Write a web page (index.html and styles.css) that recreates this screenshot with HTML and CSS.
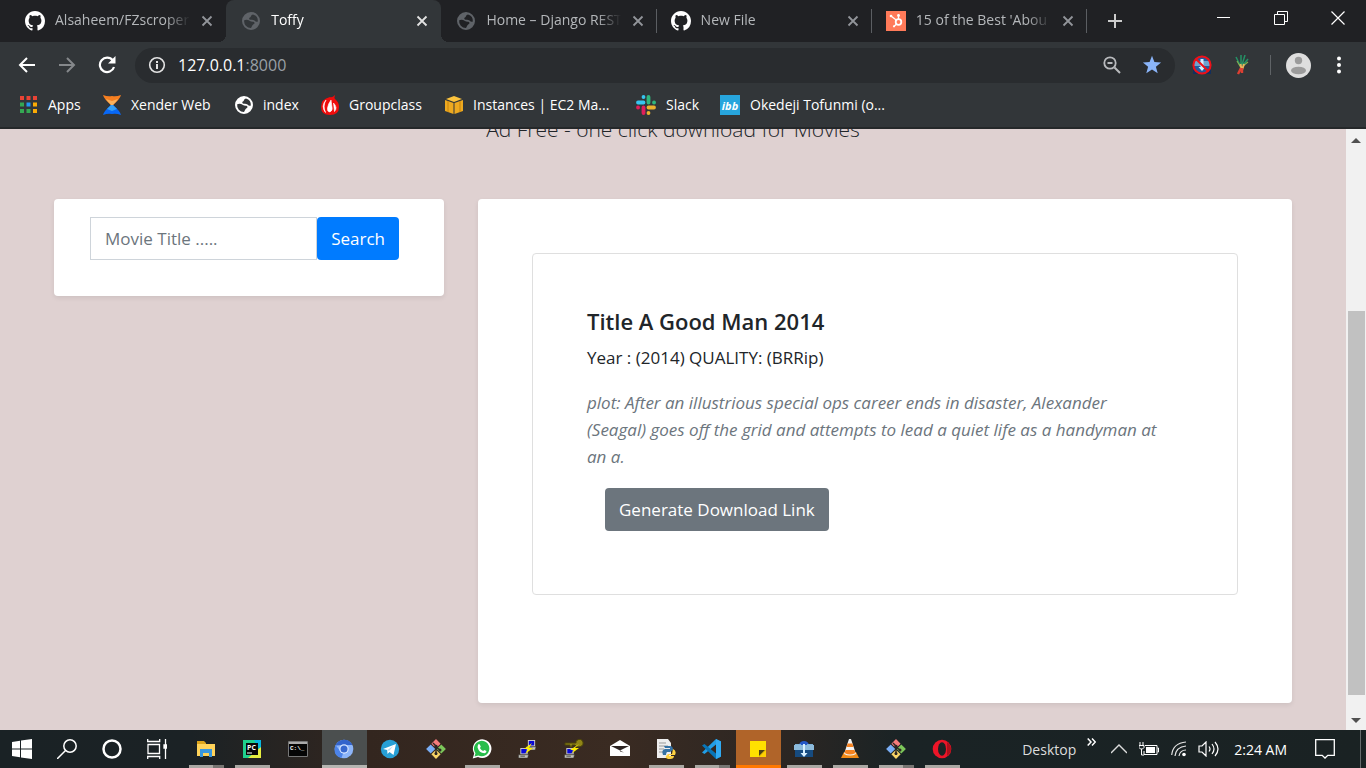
FILE: index.html
```html
<!DOCTYPE html>
<html lang="en">
<head>
<meta charset="utf-8">
<title>Toffy</title>
<link rel="stylesheet" href="styles.css">
</head>
<body>
<svg class="sprite" aria-hidden="true">
  <symbol id="github" viewBox="0 0 16 16"><path fill="#fff" d="M8 0C3.58 0 0 3.58 0 8c0 3.54 2.29 6.53 5.47 7.59.4.07.55-.17.55-.38 0-.19-.01-.82-.01-1.49-2.01.37-2.53-.49-2.69-.94-.09-.23-.48-.94-.82-1.13-.28-.15-.68-.52-.01-.53.63-.01 1.08.58 1.23.82.72 1.21 1.87.87 2.33.66.07-.52.28-.87.51-1.07-1.78-.2-3.64-.89-3.64-3.95 0-.87.31-1.59.82-2.15-.08-.2-.36-1.02.08-2.12 0 0 .67-.21 2.2.82.64-.18 1.32-.27 2-.27.68 0 1.36.09 2 .27 1.53-1.04 2.2-.82 2.2-.82.44 1.1.16 1.92.08 2.12.51.56.82 1.27.82 2.15 0 3.07-1.87 3.75-3.65 3.95.29.25.54.73.54 1.48 0 1.07-.01 1.93-.01 2.2 0 .21.15.46.55.38A8.013 8.013 0 0016 8c0-4.42-3.58-8-8-8z"/></symbol>
  <symbol id="globe" viewBox="0 0 18 18"><path fill="currentColor" fill-rule="evenodd" d="M9 0a9 9 0 1 0 0 18A9 9 0 0 0 9 0zM2.200 8.200Q5 7 8 9q1 1 3.500.8 1.500.4.8 2-1.300.4-2 1.700-.6 1.200-1.300 2.500A6.800 6.800 0 0 1 2.200 8.200zM15.800 9.500Q14 10.200 12.500 8.500 11 7.300 8.500 7.800 6.500 7.300 7.500 5.800 9 5.200 9 4 9.500 2.500 11 2.500A6.800 6.800 0 0 1 15.800 9.500z"/></symbol>
  <symbol id="close" viewBox="0 0 12 12"><path d="M1.500 1.500l9 9m0-9l-9 9" stroke="currentColor" stroke-width="1.800"/></symbol>
  <symbol id="gitlogo" viewBox="0 0 20 20"><g transform="rotate(45 10 10)"><rect x="3" y="3" width="6.500" height="6.500" fill="#f57c7c"/><rect x="10.500" y="3" width="6.500" height="6.500" fill="#7cc65a"/><rect x="3" y="10.500" width="6.500" height="6.500" fill="#7aaef5"/><rect x="10.500" y="10.500" width="6.500" height="6.500" fill="#f7d366"/></g><path d="M7 4l3 3v9M10 8l4 3" stroke="#2b2523" stroke-width="1.400" fill="none"/><g fill="#2b2523"><circle cx="10" cy="7.500" r="1.700"/><circle cx="14" cy="11" r="1.500"/><circle cx="10" cy="14.500" r="1.500"/></g></symbol>
  <symbol id="pc" viewBox="0 0 12 11"><path d="M2 0h8v7H2z" fill="#d5d5cc"/><path d="M3 1h6v5H3z" fill="#0808d8"/><path d="M0 7.500h11l-1 3.500H0z" fill="#c1c1b8" stroke="#333" stroke-width=".5"/><path d="M2 9h5" stroke="#444"/></symbol>
  <symbol id="download" viewBox="0 0 20 20"><path d="M5 6q1-4 5-4t5 4z" fill="#2458c8"/><path d="M1 5h6v11H1zM13 5h6v11h-6z" fill="#7fb2d8"/><path d="M1 10h18v8H1z" fill="#164b80"/><path d="M0 6h20v5H0z" fill="#8dbbdc"/><path d="M9 5h2v9h2.500L10 18l-3.500-4H9z" fill="#d7efff"/></symbol>
</svg>

<header class="browser">
  <div class="tabstrip">
    <nav class="tabs" aria-label="Tabs">
      <div class="tab"><svg class="favicon"><use href="#github"/></svg><span class="tabtitle">Alsaheem/FZscroper</span><button class="tabclose" aria-label="Close tab"><svg><use href="#close"/></svg></button></div>
      <div class="tab active"><svg class="favicon globe"><use href="#globe"/></svg><span class="tabtitle">Toffy</span><button class="tabclose" aria-label="Close tab"><svg><use href="#close"/></svg></button></div>
      <div class="tab divided"><svg class="favicon globe"><use href="#globe"/></svg><span class="tabtitle">Home – Django REST</span><button class="tabclose" aria-label="Close tab"><svg><use href="#close"/></svg></button></div>
      <div class="tab divided"><svg class="favicon"><use href="#github"/></svg><span class="tabtitle">New File</span><button class="tabclose" aria-label="Close tab"><svg><use href="#close"/></svg></button></div>
      <div class="tab divided"><svg class="favicon" viewBox="0 0 20 20"><path d="M0 0h20v20H0z" fill="#ff7a59"/><circle cx="12.500" cy="11" r="2.800" fill="none" stroke="#fff" stroke-width="1.800"/><path d="M5 5l5.500 4.200M12.500 8V5M10.500 13l-2.300 2.300" stroke="#fff" stroke-width="1.300"/><circle cx="5" cy="5" r="1.300" fill="#fff"/><circle cx="12.500" cy="4.500" r="1.400" fill="#fff"/><circle cx="8" cy="15.300" r="1.100" fill="#fff"/></svg><span class="tabtitle">15 of the Best 'Abou</span><button class="tabclose" aria-label="Close tab"><svg><use href="#close"/></svg></button></div>
    </nav>
    <button class="newtab" aria-label="New tab"><svg viewBox="0 0 16 16" width="16" height="16"><path d="M8 1v14M1 8h14" stroke="#ccc" stroke-width="2"/></svg></button>
    <div class="windowctl">
      <button aria-label="Minimize"><svg viewBox="0 0 14 14" width="14" height="14"><path d="M0 6.500h13" stroke="#fff"/></svg></button>
      <button aria-label="Restore"><svg viewBox="0 0 14 14" width="14" height="14"><path d="M.5 3.500h10v10H.5zM3.500 3V.5h10v10H11" stroke="#fff" fill="none"/></svg></button>
      <button aria-label="Close"><svg viewBox="0 0 14 14" width="14" height="14"><path d="M.5.5l13 13m0-13l-13 13" stroke="#fff" stroke-width="1.200"/></svg></button>
    </div>
  </div>

  <div class="toolbar">
    <button class="nav" aria-label="Back"><svg viewBox="0 0 18 18" width="18" height="18"><path d="M17 9H2m7-7L2 9l7 7" stroke="#fff" stroke-width="2" fill="none"/></svg></button>
    <button class="nav" aria-label="Forward"><svg viewBox="0 0 18 18" width="18" height="18"><path d="M1 9h15M9 2l7 7-7 7" stroke="#85888b" stroke-width="2" fill="none"/></svg></button>
    <button class="nav" aria-label="Reload"><svg viewBox="0 0 18 18" width="18" height="18"><path d="M14.800 4.500A7.200 7.200 0 1 0 16 11" stroke="#fff" stroke-width="2.200" fill="none"/><path d="M17.500 0v7.500H10z" fill="#fff"/></svg></button>
    <div class="omnibox">
      <svg viewBox="0 0 18 18" width="18" height="18"><circle cx="9" cy="9" r="7.300" stroke="#e3e3e3" stroke-width="1.600" fill="none"/><path d="M9 8v5M9 5v2" stroke="#e3e3e3" stroke-width="2"/></svg>
      <span class="url">127.0.0.1<span>:8000</span></span>
      <button aria-label="Zoom"><svg viewBox="0 0 18 18" width="18" height="18"><circle cx="7" cy="7" r="5.700" stroke="#b8babd" stroke-width="1.800" fill="none"/><path d="M4.500 7h5M11.500 11.500L17 17" stroke="#b8babd" stroke-width="2"/></svg></button>
      <button aria-label="Bookmark"><svg viewBox="0 0 20 20" width="20" height="20"><path fill="#8ab4f8" d="M10 .8l2.400 6.300 6.700.4-5.200 4.200 1.800 6.600L10 14.600l-5.700 3.700 1.800-6.600L.9 7.500l6.700-.4z"/></svg></button>
    </div>
    <button class="ext" aria-label="Download manager"><svg viewBox="0 0 20 20" width="20" height="20"><path d="M1 9h18v10H1z" fill="#122f5e"/><circle cx="10" cy="10" r="8.500" fill="#245b9c"/><path d="M2 6h16v5H2z" fill="#6fa3cf"/><path d="M8.500 4h3v8h2L10 16l-3.500-4h2z" fill="#d7efff"/><circle cx="10" cy="10" r="8.600" fill="none" stroke="#f01018" stroke-width="2"/><path d="M4 4l12 12" stroke="#f01018" stroke-width="2"/></svg></button>
    <button class="ext" aria-label="Extension"><svg viewBox="0 0 20 20" width="20" height="20" fill="none" stroke-width="1.500"><path d="M8 10L4 2M9 10L9 0M10 10l3-10M11 10l5-6" stroke="#249266"/><path d="M8.500 12L5 6M11 11l5-4" stroke="#7fae54" stroke-width="1.200"/><path d="M8.500 9l1 5M12 9l-2 6" stroke="#e8b55c" stroke-width="2"/><path d="M9 13l-3 6M10 13v5" stroke="#dd3f32" stroke-width="2.400"/></svg></button>
    <span class="bar"></span>
    <button class="profile" aria-label="Profile"><svg viewBox="0 0 25 25" width="25" height="25"><circle cx="12.500" cy="12.500" r="12.500" fill="#dedede"/><circle cx="12.500" cy="7.500" r="3.700" fill="#9b9b9b"/><ellipse cx="12.500" cy="17.500" rx="7.500" ry="3.800" fill="#9b9b9b"/></svg></button>
    <button class="more" aria-label="Menu"><svg viewBox="0 0 4 18" width="4" height="18"><g fill="#fff"><circle cx="2" cy="2.500" r="2"/><circle cx="2" cy="9" r="2"/><circle cx="2" cy="15.500" r="2"/></g></svg></button>
  </div>

  <nav class="bookmarks" aria-label="Bookmarks">
    <a href="#"><svg viewBox="0 0 18 18"><path fill="#ea4335" d="M0 0h4v4H0zM6.500 0h4v4h-4zM13 0h4v4h-4z"/><path fill="#34a853" d="M0 6.500h4v4H0zM0 13h4v4H0z"/><path fill="#2196f3" d="M6.500 6.500h4v4h-4z"/><path fill="#fbab05" d="M13 6.500h4v4h-4zM13 13h4v4h-4z"/><path fill="#34a853" d="M6.500 13h4v4h-4z"/></svg>Apps</a>
    <a href="#"><svg viewBox="0 0 18 20"><path d="M0 0q5 2 9 1 4 1 9-1-1 4-8 10H8Q1 4 0 0z" fill="#f77f20"/><path d="M3 4l6 2 6-2q-2 3-5 6H8Q5 7 3 4z" fill="#f9b25c"/><path d="M8 10h2q7 6 8 10-5-2-9-1-4-1-9 1 1-4 8-10z" fill="#0868f7"/><path d="M8 10h2l4 4-5 2-5-2z" fill="#36a0f6"/></svg>Xender Web</a>
    <a href="#"><svg class="white" viewBox="0 0 18 20"><use href="#globe" y="1" width="18" height="18"/></svg>index</a>
    <a href="#"><svg viewBox="0 0 18 20"><path d="M9 2q2 1 5-2-1 3 0 4 4 3 4 8 0 8-9 8-9 0-9-8Q0 4 9 2z" fill="#f00c0c"/><path d="M5 5Q-.5 11 4.500 17.500 1.500 11 5 5zM10 5q-3 4-3.500 8-.5 4 2.500 4 3-1.500 2-5zM12.500 8l1 8.500q3.500-4-1-8.500z" fill="#fff" stroke="#fff" stroke-width=".6"/></svg>Groupclass</a>
    <a href="#"><svg viewBox="0 0 18 18"><path d="M1 3l8-3 8 3-8 3z" fill="#fbc33d"/><path d="M0 4l8.500 3v11L0 15zM18 4L9.500 7v11l8.500-3z" fill="#eda920"/><path d="M3 5v11M15 5v11" stroke="#c7820a"/></svg>Instances | EC2 Ma...</a>
    <a href="#"><svg viewBox="0 0 20 20"><g stroke-width="3.800" stroke-linecap="round"><path d="M2 7.500h5.500M7.500 2v.1" stroke="#36c5f0"/><path d="M12.500 2v5.500M18 7.500h.1" stroke="#2eb67d"/><path d="M12.500 12.500H18M12.500 18v.1" stroke="#ecb22e"/><path d="M7.500 12.500V18M2 12.500h.1" stroke="#e01e5a"/></g></svg>Slack</a>
    <a href="#"><svg viewBox="0 0 20 20"><path d="M0 0h20v20H0z" fill="#27a5dd"/><text x="10" y="15" text-anchor="middle" class="ibb">ibb</text></svg>Okedeji Tofunmi (o...</a>
  </nav>
</header>

<div class="viewport">
  <main class="page">
    <h2 class="tagline">Ad Free - one click download for Movies</h2>
    <div class="columns">
      <section class="card searchcard">
        <form class="searchform">
          <input type="text" placeholder="Movie Title ....." aria-label="Movie Title">
          <button type="button" class="btn primary">Search</button>
        </form>
      </section>
      <section class="card results">
        <article class="movie">
          <h1>Title A Good Man 2014</h1>
          <p>Year : (2014) QUALITY: (BRRip)</p>
          <p class="plot">plot: After an illustrious special ops career ends in disaster, Alexander (Seagal) goes off the grid and attempts to lead a quiet life as a handyman at an a.</p>
          <button type="button" class="btn secondary">Generate Download Link</button>
        </article>
      </section>
    </div>
  </main>
  <div class="scrollbar" aria-hidden="true">
    <svg viewBox="0 0 20 20"><path d="M5 14l5-5 5 5z" fill="#505050"/></svg>
    <div class="track"><div class="thumb"></div></div>
    <svg viewBox="0 0 20 20"><path d="M5 8h10l-5 5z" fill="#505050"/></svg>
  </div>
</div>

<footer class="taskbar">
  <div class="system">
    <button aria-label="Start"><svg viewBox="0 0 20 20"><path fill="#fff" d="M0 3l8-1.200v7.700H0zM9 1.600L20 0v9.500H9zM0 10.500h8v7.700L0 17zM9 10.500h11V20L9 18.400z"/></svg></button>
    <button aria-label="Search"><svg viewBox="0 0 20 20" fill="none" stroke="#fff" stroke-width="1.500"><circle cx="13" cy="7" r="6.200"/><path d="M8.500 11.500L0 20"/></svg></button>
    <button aria-label="Cortana"><svg viewBox="0 0 20 20"><circle cx="10" cy="10" r="8.500" fill="none" stroke="#fff" stroke-width="2.500"/></svg></button>
    <button aria-label="Task view"><svg viewBox="0 0 20 20" fill="none" stroke="#fff" stroke-width="1.300"><path d="M1 5.500h11.500v9H1zM.7 0v2.500h12V0M.7 20v-2.500h12V20M18.500 0v20"/><path d="M17 6h3v3h-3z" fill="#fff"/></svg></button>
  </div>
  <div class="apps">
    <button class="running multi" aria-label="File Explorer"><svg viewBox="0 0 20 20"><path d="M1 2h7l2 2v4H1z" fill="#dda51c"/><path d="M1 5h18v12H1z" fill="#ffd35a"/><path d="M4 10h12v8h-3v-4H7v4H4z" fill="#3897df"/></svg></button>
    <button class="running" aria-label="PyCharm"><svg viewBox="0 0 20 20"><path d="M1 1h18v18H1z" fill="#1fd08d"/><path d="M12 1h7v12z" fill="#09b6e0"/><path d="M19 8v11H6z" fill="#e6ee40"/><path d="M4 4h12v12H4z" fill="#080808"/><text x="5" y="11" class="pclogo">PC</text><path d="M5 14h5" stroke="#fff"/></svg></button>
    <button aria-label="Command Prompt"><svg viewBox="0 0 20 20"><path d="M.5 2.500h19v15H.5z" fill="#050505" stroke="#777"/><path d="M1 3h18v2H1z" fill="#aaa"/><text x="2" y="11" class="cmdlogo">C:\_</text></svg></button>
    <button class="current" aria-label="Chromium"><svg viewBox="0 0 20 20"><circle cx="10" cy="10" r="9.300" fill="#8db5f9"/><path d="M1.500 6.500A9.300 9.300 0 0 1 18.500 6H10z" fill="#3364cc"/><path d="M1.500 6l5 6.500 3 .5-2 6Q-2 17 1.500 6z" fill="#4c83e8"/><circle cx="10" cy="10" r="4.700" fill="#d9e7ff"/><circle cx="10" cy="10" r="3.500" fill="#3768cf"/></svg></button>
    <button aria-label="Telegram"><svg viewBox="0 0 20 20"><circle cx="10" cy="10" r="9.200" fill="#279fd5"/><path d="M3 10l13-5-2.500 11-4-3-2 2-.3-4z" fill="#fff"/><path d="M7.300 11l6-4-4.300 5" fill="#b9dcf0"/></svg></button>
    <button aria-label="Git Bash"><svg><use href="#gitlogo"/></svg></button>
    <button class="running" aria-label="WhatsApp"><svg viewBox="0 0 20 20"><path d="M.7 19.500l1.500-5A9.300 9.300 0 1 1 6 18z" fill="#fff"/><path d="M2.500 17.500l1-3.300A7.700 7.700 0 1 1 6.300 16.500z" fill="#28bd4b"/><path d="M6 6q1-2 2 0l.8 1.800-.9 1.200q1 2.200 3.200 3.100l1.200-1.200 2.200 1q0 2-2 2.300Q7 14 5.600 8.500q-.1-1.500.4-2.500z" fill="#fff"/></svg></button>
    <button aria-label="PuTTY"><svg viewBox="0 0 20 20"><use href="#pc" x="8" y="1" width="11" height="10"/><use href="#pc" x="0" y="9" width="12" height="10"/><path d="M14 4l-8 6h4l-3 5 8-6h-4z" fill="#fff000"/></svg></button>
    <button aria-label="PuTTYgen"><svg viewBox="0 0 20 20"><path d="M1 4h11V2q5-4 7 1 1 5-6 5l-2-2H8v2H6V6H1z" fill="#908516" stroke="#4b4508"/><use href="#pc" x="0" y="9" width="12" height="10"/><path d="M15 5l-9 6h4l-3 4 8-6h-4z" fill="#fff000"/></svg></button>
    <button aria-label="Mail"><svg viewBox="0 0 20 20"><path d="M0 7l10-6 10 6v10H0z" fill="#fff"/><path d="M1 7h18l-8 4-1 1.500 4 1z" fill="#2d2422"/></svg></button>
    <button class="running" aria-label="Python"><svg viewBox="0 0 20 20"><path d="M1 0h11l3 4v15H1z" fill="#eee"/><path d="M3 4h7M3 7h9M3 10h5M3 13h4" stroke="#999"/><path d="M8 7h6q3 0 3 4l-3 2h-3q-1 1-1 3H7q-2-5 2-6h5V9H9z" fill="#3572a5"/><path d="M17 10q4 2 2 6h-6v1h5q0 3-4 3-5 0-4-3l2-2h4z" fill="#ffd343"/></svg></button>
    <button class="running multi" aria-label="Visual Studio Code"><svg viewBox="0 0 20 20"><path d="M14 0l5 2.500v15L14 20V5.500L2.500 15 0 13.500z" fill="#229de5"/><path d="M14 20l5-2.500V15l-5-.5L2.500 5 0 6.500z" fill="#0875b8"/><path d="M14 0l5 2.500v15L14 20z" fill="#31aaf2"/></svg></button>
    <button class="attention" aria-label="Sticky Notes"><svg viewBox="0 0 20 20"><path d="M2 2h16v9l-7 7H2z" fill="#ffe100"/><path d="M18 11v7h-7z" fill="#ffd000"/><path d="M11 11h6l-6 6z" fill="#4d4114"/></svg></button>
    <button class="running" aria-label="Download Manager"><svg><use href="#download"/></svg></button>
    <button class="running" aria-label="VLC"><svg viewBox="0 0 20 20"><path d="M4 13h12l3 6H1z" fill="#f18a17"/><path d="M9 0h2l5 15q-6 3-12 0z" fill="#f4f4f4"/><path d="M7.600 4.500h4.800l1 3.500H6.500zM5.500 11h9l1 3q-5.500 3-11 0z" fill="#f58220"/></svg></button>
    <button class="running multi" aria-label="Git Bash"><svg><use href="#gitlogo"/></svg></button>
    <button class="running" aria-label="Opera"><svg viewBox="0 0 20 20"><circle cx="10" cy="10" r="9.300" fill="#ed1528"/><path d="M15 3q4 3 4 7t-4 7z" fill="#ad101b"/><ellipse cx="10" cy="10" rx="4" ry="6.700" fill="#1c2425"/></svg></button>
  </div>
  <div class="tray">
    <span class="desk">Desktop</span>
    <button class="chevrons" aria-label="More toolbars"><svg viewBox="0 0 9 8" width="9" height="8"><path d="M.7.5L4 4 .7 7.500M5 .5L8.300 4 5 7.500" stroke="#fff" stroke-width="1.500" fill="none"/></svg></button>
    <button class="wide" aria-label="Hidden icons"><svg viewBox="0 0 16 16" width="16" height="16"><path d="M0 12l8-8 8 8" stroke="#ddd" stroke-width="1.400" fill="none"/></svg></button>
    <button class="wide" aria-label="Battery"><svg viewBox="0 0 20 14" width="20" height="14"><path d="M6 3.500h12v9H5V9M18.500 6h1v4h-1" stroke="#fff" fill="none"/><path d="M7 5h9v6H7z" fill="#fff"/><path d="M1 0v3M4 0v3M0 3.500h5v2L3.500 7h-2L0 5.500zM2.500 7v6H5" stroke="#fff" fill="none"/></svg></button>
    <button class="wide" aria-label="Network"><svg viewBox="0 0 16 16" width="16" height="16" fill="none" stroke="#e6e6e6" stroke-width="1.200"><path d="M.7 14Q2 2 15 1M4 15Q5 6 15 5M8 15q1-6 7-6"/><circle cx="13" cy="13.500" r="1.800" fill="#fff" stroke="none"/></svg></button>
    <button class="wide" aria-label="Volume"><svg viewBox="0 0 22 16" width="22" height="16" fill="none" stroke="#fff" stroke-width="1.200"><path d="M1 5h3l4-4v14l-4-4H1zM11 5.500q2 2.500 0 5M14 3q4 5 0 10M17 1q6 7 0 14"/></svg></button>
    <time>2:24 AM</time>
    <button class="notice" aria-label="Notifications"><svg viewBox="0 0 20 20" width="20" height="20"><path d="M.7.7h18.600v15.600h-6.500L10 19l-2.800-2.700H.7z" stroke="#fff" stroke-width="1.300" fill="none"/></svg></button>
  </div>
</footer>
</body>
</html>
```
FILE: styles.css
```css
* { box-sizing: border-box; }

body {
  margin: 0;
  height: 100vh;
  display: flex;
  flex-direction: column;
  overflow: hidden;
  font-family: "Open Sans", "Noto Sans", sans-serif;
  color: #212529;
}

.sprite { display: none; }
svg { display: block; flex: none; }
h1, h2, p { margin: 0; }

button {
  border: 0;
  padding: 0;
  background: none;
  font: inherit;
  display: flex;
  align-items: center;
  justify-content: center;
  flex: none;
}

/* Browser chrome */
.browser {
  flex: none;
  background: #323639;
  border-bottom: 2px solid #25282a;
}

.tabstrip {
  display: flex;
  height: 42px;
  background: #202124;
}

.tabs {
  display: flex;
  flex: 0 1 1087px;
  padding-left: 11px;
  min-width: 0;
}

.tab {
  display: flex;
  align-items: center;
  flex: 1 1 215px;
  min-width: 0;
  padding: 0 13px 0 14px;
  font-size: 14px;
  line-height: 20px;
  color: #b4b7ba;
}
.tab.active {
  position: relative;
  background: #323639;
  border-radius: 8px 8px 0 0;
  color: #fff;
}
.tab.active::before,
.tab.active::after {
  content: "";
  position: absolute;
  bottom: 0;
  width: 8px;
  height: 8px;
}
.tab.active::before { right: 100%; background: radial-gradient(circle at 0 0, transparent 8px, #323639 8px); }
.tab.active::after { left: 100%; background: radial-gradient(circle at 100% 0, transparent 8px, #323639 8px); }
.tab.divided {
  background: linear-gradient(#5b5e62, #5b5e62) no-repeat right center / 1px 24px;
}
.favicon { width: 20px; height: 20px; margin-right: 10px; }
.globe { width: 18px; height: 18px; color: #5f6368; margin: 0 11px 0 2px; }
.tabtitle {
  flex: 1;
  min-width: 0;
  overflow: hidden;
  white-space: nowrap;
  padding-bottom: 2px;
  mask-image: linear-gradient(to left, transparent, #000 24px);
}
.tabclose { width: 12px; height: 12px; margin-left: 11px; color: #92959a; }
.tabclose svg { width: 12px; height: 12px; }
.active .tabclose { color: #e2e2e2; }

.newtab { width: 56px; }
.windowctl { display: flex; margin-left: auto; height: 36px; }
.windowctl button { width: 57px; }

.toolbar {
  display: flex;
  align-items: center;
  height: 46px;
  padding: 0 14px 0 7px;
}
.nav { width: 40px; height: 36px; }
.omnibox {
  flex: 1;
  display: flex;
  align-items: center;
  height: 35px;
  margin-left: 8px;
  padding: 0 3px 0 13px;
  border-radius: 18px;
  background: #292c2f;
}
.omnibox button { width: 40px; height: 34px; }
.url { flex: 1; padding-left: 12px; font-size: 16px; color: #fff; }
.url span { color: #9aa0a6; }
.ext { width: 40px; margin-left: 7px; }
.ext + .ext { margin-left: 0; }
.bar { width: 1px; height: 20px; margin-left: 8px; background: #5f6366; }
.profile { width: 55px; }
.more { width: 26px; }

.bookmarks {
  display: grid;
  grid-template-columns: 83px 132px 86px 124px 191px 84px auto;
  align-items: center;
  justify-content: start;
  height: 39px;
  padding: 0 20px 6px;
}
.bookmarks a {
  display: flex;
  align-items: center;
  white-space: nowrap;
  text-decoration: none;
  font-size: 14px;
  color: #fff;
}
.bookmarks svg { width: 18px; height: 20px; margin-right: 10px; }
.bookmarks a:nth-child(n+6) svg { width: 20px; }
.white { color: #fff; }
.ibb { font: italic bold 11px "Open Sans", sans-serif; fill: #fff; }

/* Page */
.viewport { flex: 1; min-height: 0; display: flex; }
.page {
  flex: 1;
  min-width: 0;
  overflow: hidden;
  padding: 0 54px;
  background: #dfd1d1;
}
.tagline {
  margin: -14px 0 56px;
  font-size: 21px;
  line-height: 28px;
  font-weight: 300;
  text-align: center;
}
.columns {
  display: grid;
  grid-template-columns: minmax(0, 390fr) minmax(0, 814fr);
  gap: 34px;
  align-items: start;
}
.card {
  background: #fff;
  border-radius: 4px;
  box-shadow: 0 2px 5px rgba(0, 0, 0, .08);
}
.searchcard { padding: 18px 45px 36px 36px; }
.searchform { display: flex; }
.searchform input {
  flex: 1;
  min-width: 0;
  height: 43px;
  padding: 0 14px;
  border: 1px solid #ced4da;
  font: 17px "Open Sans", sans-serif;
}
.searchform input::placeholder { color: #6c757d; }
.btn {
  height: 43px;
  padding: 0 14px;
  border-radius: 4px;
  font-size: 17px;
  color: #fff;
}
.primary { background: #007bff; }
.secondary { background: #6c757d; margin: 18px 0 0 18px; }

.results { padding: 54px 54px 108px; }
.movie {
  border: 1px solid #dfdfdf;
  border-radius: 4px;
  padding: 54px 54px 63px;
  font-size: 17px;
  line-height: 27px;
}
.movie h1 { font-size: 22px; line-height: 27px; font-weight: 600; margin-bottom: 9px; }
.plot { margin-top: 18px; padding-right: 18px; font-style: italic; color: #6c757d; }

.scrollbar {
  flex: none;
  width: 20px;
  display: flex;
  flex-direction: column;
  background: #f1f1f1;
}
.scrollbar svg { width: 20px; height: 20px; }
.track { flex: 1; display: flex; flex-direction: column; justify-content: flex-end; padding: 0 1px 15px 2px; }
.thumb { flex: 0 0 70.3%; background: #c1c1c1; }

/* Taskbar */
.taskbar {
  flex: none;
  display: flex;
  height: 38px;
  color: #fff;
  background: linear-gradient(90deg, #1a2225 0, #1b2225 14%, #33261f 27%, #3a2b22 45%, #2b2623 58%, #1a2325 66%, #1a2223 100%);
}
.system, .apps, .tray { display: flex; }
.system button, .apps button { width: 45px; padding-right: 1px; }
.system svg, .apps svg { width: 20px; height: 20px; }
.apps { gap: 1px; margin-left: 4px; }
.running { background: linear-gradient(#aaa8a3, #aaa8a3) no-repeat center bottom / 35px 3px; }
.running.multi { background-image: linear-gradient(90deg, #aaa8a3 24px, #777572 24px); }
.current { background: #4b4f4f linear-gradient(#b5b5b1, #b5b5b1) no-repeat bottom / 100% 3px; }
.attention { background: #b06429 linear-gradient(#ff7800, #ff7800) no-repeat bottom / 100% 3px; }
.pclogo { font: bold 7px "Open Sans", sans-serif; fill: #fff; }
.cmdlogo { font: bold 6px "Liberation Mono", monospace; fill: #fff; }

.tray { margin-left: auto; align-items: center; padding-right: 4px; border-right: 1px solid #666b6c; margin-right: 5px; font-size: 14px; }
.desk { color: #ddd; }
.chevrons { width: 28px; height: 24px; align-items: flex-start; align-self: flex-start; padding: 8px 0 0 2px; }
.wide { width: 30px; height: 38px; }
time { padding: 0 7px 0 10px; }
.notice { width: 62px; }
```
